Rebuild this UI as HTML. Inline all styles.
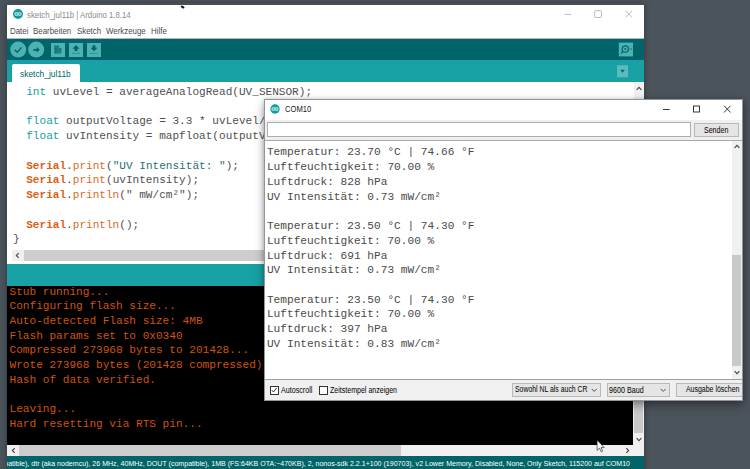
<!DOCTYPE html>
<html lang="de">
<head>
<meta charset="utf-8">
<title>sketch_jul11b | Arduino 1.8.14</title>
<style>
*{box-sizing:border-box;margin:0;padding:0}
html,body{width:750px;height:469px;overflow:hidden}
body{background:#4b535b;font-family:"Liberation Sans",sans-serif;position:relative}
.abs{position:absolute}
#main{position:absolute;left:7px;top:4px;width:637px;height:480px;background:#fff;box-shadow:0 0 6px rgba(0,0,0,.35)}
#main .title{position:absolute;left:19.800px;top:5.800px;font-size:8.700px;transform:scaleX(.897);transform-origin:0 0;color:#8a8a8a;white-space:nowrap;line-height:10px}
#main .menu{position:absolute;left:0;top:19.3px;width:637px;height:14px;font-size:7.9px;color:#4a4a4a;line-height:10px}
#main .menu span{position:absolute;top:2.800px;white-space:nowrap;font-size:8.700px;transform:scaleX(.908);transform-origin:0 0}
.toolbar{position:absolute;left:0;top:35px;width:637px;height:21px;background:#006468}
.tabbar{position:absolute;left:0;top:56px;width:637px;height:22px;background:#17a1a5}
.tab{position:absolute;left:5px;top:4px;width:68px;height:18px;background:#fff;border-radius:2px 2px 0 0;font-size:8.4px;color:#006468;line-height:10px}
.tab span{position:absolute;left:8px;top:5.200px;white-space:nowrap;font-size:9px;transform:scaleX(.933);transform-origin:0 0}
.code{position:absolute;left:5.900px;top:81px;font-family:"Liberation Mono",monospace;font-size:11.09px;line-height:14.74px;white-space:pre;color:#505050}
.code .t{color:#1a9da1}
.code .k{color:#d95f14;font-weight:bold}
.code .f{color:#d96a25}
.code .s{color:#1f7073}
.console{position:absolute;left:0;top:282px;width:626px;height:158.800px;background:#000}
.console pre{position:absolute;left:2.5px;top:-1.5px;font-family:"Liberation Mono",monospace;font-size:11.1px;line-height:14.74px;color:#cf540c;white-space:pre}
.statusbar{position:absolute;left:0;top:452px;width:637px;height:20px;background:#006468;color:#fff;font-size:7.05px;line-height:10px;white-space:nowrap;overflow:hidden}
.statusbar span{position:absolute;right:14px;top:2.800px}
#com{position:absolute;left:264px;top:98.7px;width:478.5px;height:302.700px;overflow:hidden;background:#f0f0f0;border:1px solid #8f969c;box-shadow:0 0 4px rgba(0,0,0,.16),0 4px 9px rgba(0,0,0,.38)}
#com .tb{position:absolute;left:0;top:0;width:100%;height:20.300px;background:#fff}
#com .tb .tt{position:absolute;left:20px;top:4.600px;font-size:8.300px;transform:scaleX(.915);transform-origin:0 0;color:#222;line-height:10px}
#com .out{position:absolute;left:0;top:41.500px;width:467px;height:238px;background:#fff}
#com .out pre{position:absolute;left:1.900px;top:4.200px;font-family:"Liberation Mono",monospace;font-size:11.170px;line-height:14.740px;color:#4a4a4a;white-space:pre}
.sx{display:inline-block;transform:scaleX(.845)}.sx.l{transform-origin:0 50%}.sx.c{transform-origin:50% 50%}
.sm{font-size:7.200px;color:#000;line-height:10px;white-space:nowrap}
</style>
</head>
<body>

<div id="main">
  <svg class="abs" style="left:6px;top:5px" width="10" height="10" viewBox="0 0 10 10"><circle cx="5" cy="5" r="5" fill="#12999d"/><g fill="rgba(255,255,255,.3)" stroke="#c4e6f2" stroke-width=".9"><circle cx="3.400" cy="5" r="1.600"/><circle cx="6.600" cy="5" r="1.600"/></g></svg>
  <div class="abs" style="left:-3px;top:-1px;width:645px;height:1.500px;background:#474f57"></div>
  <svg class="abs" style="left:172px;top:0" width="8" height="6" viewBox="0 0 8 6"><ellipse cx="3.600" cy="3" rx="2.100" ry="1" fill="#14161a" transform="rotate(28 3.600 3)"/></svg>
  <div class="title">sketch_jul11b | Arduino 1.8.14</div>
  <svg class="abs" style="left:550px;top:4px" width="84" height="12" viewBox="0 0 84 12"><g fill="none" stroke="#a8a8a8" stroke-width=".8"><path d="M7.700 6.400h6.400"/><rect x="37.700" y="2.700" width="6.800" height="6.800" rx=".8"/><path d="M68.700 2.800l6.300 6.500M75 2.800l-6.300 6.500"/></g></svg>
  <div class="menu"><span style="left:3px">Datei</span><span style="left:26px">Bearbeiten</span><span style="left:70px">Sketch</span><span style="left:99px">Werkzeuge</span><span style="left:144px">Hilfe</span></div>
  <div class="abs" style="left:0;top:33.600px;width:637px;height:1.300px;background:#b4b4b4"></div>
  <div class="toolbar">
    <svg class="abs" style="left:0;top:0" width="637" height="21" viewBox="0 0 637 21">
      <g fill="#4db2b4">
        <circle cx="11.200" cy="10.600" r="8"/><circle cx="29.200" cy="10.600" r="8"/>
        <rect x="44" y="4" width="14" height="14"/><rect x="62" y="4" width="14" height="14"/><rect x="80" y="4" width="14" height="14"/>
        <rect x="611.800" y="3.600" width="14.200" height="13.800"/>
      </g>
      <g fill="none" stroke="#006468" stroke-width="1.300">
        <path d="M7.600 10.700l2.700 2.600l4.300-4.900"/>
      </g>
      <g fill="#006468">
        <path d="M26.300 9.900h3.400v-1.900l3 2.800l-3 2.800v-1.900h-3.400z"/>
        <path d="M47.400 6.600h4.200l2.700 2.700v5.300h-6.900z" fill="#006468" opacity=".85"/>
        <path d="M51.600 6.600v2.700h2.700z" fill="#4db2b4"/>
        <g fill="#4db2b4" opacity=".75"><rect x="48.600" y="7.600" width="1.200" height="1.200"/><rect x="50.200" y="9.400" width="1.200" height="1.200"/><rect x="48.600" y="11.200" width="1.200" height="1.200"/><rect x="51.800" y="11.200" width="1.200" height="1.200"/><rect x="50.200" y="12.800" width="1.200" height="1.200"/><rect x="52.600" y="12.900" width="1" height="1"/></g>
        <path d="M69 5.900l3.600 3.900h-2.200v2.100h-2.800v-2.100h-2.200z"/><path d="M65.200 14.300h7.800" stroke="#006468" stroke-width=".9" stroke-dasharray="1.200 .6" opacity=".6"/>
        <path d="M87 12.300l3.500-3.500h-2.100v-2.600h-2.800v2.600h-2.100z"/><path d="M83 14.500h8" stroke="#006468" stroke-width=".9" stroke-dasharray="1.200 .6" opacity=".6"/>
      </g>
      <g fill="none" stroke="#006468" stroke-width="1.200"><circle cx="618.300" cy="10" r="3.200"/><path d="M616 12.400l-1.900 2.200"/><path d="M622.600 10h2.400" stroke-dasharray=".9 .6" stroke-width="1"/></g>
      <circle cx="618.300" cy="10" r="1" fill="#006468"/>
    </svg>
  </div>
  <div class="tabbar">
    <div class="tab"><span>sketch_jul11b</span></div>
    <svg class="abs" style="left:610.100px;top:4.600px" width="12" height="13" viewBox="0 0 12 13"><rect x="0" y="0" width="11" height="12.300" fill="#5bbcbe"/><path d="M3.300 4.800h4.600l-2.300 3z" fill="#08696d"/><path d="M1 0.300h9.500" stroke="#17a1a5" stroke-width=".7" stroke-dasharray="1 1.200"/></svg>
  </div>
  <!-- editor -->
  <div class="code">  <span class="t">int</span> uvLevel = averageAnalogRead(UV_SENSOR);

  <span class="t">float</span> outputVoltage = 3.3 * uvLevel/1024;
  <span class="t">float</span> uvIntensity = mapfloat(outputVoltage, 0.99, 2.9, 0.0, 15.0);

  <span class="k">Serial</span>.<span class="f">print</span>(<span class="s">"UV Intensität: "</span>);
  <span class="k">Serial</span>.<span class="f">print</span>(uvIntensity);
  <span class="k">Serial</span>.<span class="f">println</span>(" mW/cm²");

  <span class="k">Serial</span>.<span class="f">println</span>();
}</div>
  <!-- editor v scrollbar -->
  <div class="abs" style="left:626.500px;top:78px;width:10.500px;height:168px;background:#f0f0f0"></div>
  <svg class="abs" style="left:628.600px;top:81.500px" width="6" height="5" viewBox="0 0 6 5"><path d="M.6 3.800l2.400-2.500l2.400 2.500" fill="none" stroke="#454545" stroke-width="1.100"/></svg>
  <!-- editor h scrollbar -->
  <div class="abs" style="left:4.500px;top:246px;width:622px;height:10.500px;background:#f0f0f0"></div>
  <div class="abs" style="left:16.500px;top:246px;width:500px;height:10.500px;background:#cdcdcd"></div>
  <svg class="abs" style="left:8px;top:248px" width="5" height="7" viewBox="0 0 5 7"><path d="M3.700 1.100l-2.400 2.400l2.400 2.400" fill="none" stroke="#454545" stroke-width="1.100"/></svg>
  <!-- status band -->
  <div class="abs" style="left:0;top:260px;width:637px;height:22px;background:#17a1a5"></div>
  <!-- console -->
  <div class="console"><pre>Stub running...
Configuring flash size...
Auto-detected Flash size: 4MB
Flash params set to 0x0340
Compressed 273968 bytes to 201428...
Wrote 273968 bytes (201428 compressed) at 0x00000000 in 17.8 seconds
Hash of data verified.

Leaving...
Hard resetting via RTS pin...</pre></div>
  <div class="abs" style="left:626px;top:282px;width:11px;height:159px;background:#f0f0f0"></div>
  <div class="abs" style="left:627.100px;top:385px;width:9.300px;height:44px;background:#c9c9c9"></div>
  <svg class="abs" style="left:628.600px;top:433px" width="6" height="5" viewBox="0 0 6 5"><path d="M.6 1.200l2.400 2.500l2.400-2.500" fill="none" stroke="#454545" stroke-width="1.100"/></svg>
  <div class="abs" style="left:0;top:441px;width:637px;height:11px;background:#f0f0f0"></div>
  <div class="abs" style="left:12px;top:441px;width:382px;height:11px;background:#cdcdcd"></div>
  <svg class="abs" style="left:4px;top:443px" width="5" height="7" viewBox="0 0 5 7"><path d="M3.700 1.100l-2.400 2.400l2.400 2.400" fill="none" stroke="#454545" stroke-width="1.100"/></svg>
  <svg class="abs" style="left:618px;top:443px" width="5" height="7" viewBox="0 0 5 7"><path d="M1.300 1.100l2.400 2.400l-2.400 2.400" fill="none" stroke="#454545" stroke-width="1.100"/></svg>
  <div class="statusbar"><span>NodeMCU 1.0 (ESP-12E Module), 80 MHz, Flash, Legacy (new can return nullptr), All SSL ciphers (most compatible), dtr (aka nodemcu), 26 MHz, 40MHz, DOUT (compatible), 1MB (FS:64KB OTA:~470KB), 2, nonos-sdk 2.2.1+100 (190703), v2 Lower Memory, Disabled, None, Only Sketch, 115200 auf COM10</span></div>
</div>

<div id="com">
  <div class="tb">
    <svg class="abs" style="left:5.100px;top:4.600px" width="10" height="10" viewBox="0 0 10 10"><circle cx="5" cy="5" r="4.700" fill="#12999d"/><g fill="rgba(255,255,255,.3)" stroke="#c4e6f2" stroke-width=".9"><circle cx="3.400" cy="5" r="1.600"/><circle cx="6.600" cy="5" r="1.600"/></g></svg>
    <div class="tt">COM10</div>
    <svg class="abs" style="left:390px;top:3px" width="84" height="12" viewBox="0 0 84 12"><g fill="none" stroke="#222" stroke-width=".9"><path d="M8 6.500h6.600"/><rect x="38.500" y="3" width="6" height="6"/><path d="M69 2.700l6.600 6.800M75.600 2.700l-6.600 6.800"/></g></svg>
  </div>
  <div class="abs" style="left:2px;top:22.800px;width:423.500px;height:14.500px;background:#fff;border:1px solid #adadad"></div>
  <div class="abs sm" style="left:429px;top:23px;width:45.300px;height:14px;background:#e5e5e5;border:1px solid #b8b8b8;text-align:center;line-height:12.300px;font-size:8.39px;text-indent:-.3px"><span class="sx c">Senden</span></div>
  <div class="abs" style="left:0;top:40.700px;width:478px;height:1px;background:#a8a8a8"></div>
  <div class="out"><pre>Temperatur: 23.70 °C | 74.66 °F
Luftfeuchtigkeit: 70.00 %
Luftdruck: 828 hPa
UV Intensität: 0.73 mW/cm²

Temperatur: 23.50 °C | 74.30 °F
Luftfeuchtigkeit: 70.00 %
Luftdruck: 691 hPa
UV Intensität: 0.73 mW/cm²

Temperatur: 23.50 °C | 74.30 °F
Luftfeuchtigkeit: 70.00 %
Luftdruck: 397 hPa
UV Intensität: 0.83 mW/cm²</pre></div>
  <!-- com scrollbar -->
  <div class="abs" style="left:466.500px;top:41.500px;width:11px;height:238px;background:#f0f0f0"></div>
  <div class="abs" style="left:466.800px;top:155.300px;width:9.700px;height:111.500px;background:#c9c9c9"></div>
  <svg class="abs" style="left:468.700px;top:44.800px" width="6" height="5" viewBox="0 0 6 5"><path d="M.6 3.800l2.400-2.500l2.400 2.500" fill="none" stroke="#454545" stroke-width="1.100"/></svg>
  <svg class="abs" style="left:468.700px;top:270px" width="6" height="5" viewBox="0 0 6 5"><path d="M.6 1.200l2.400 2.500l2.400-2.500" fill="none" stroke="#454545" stroke-width="1.100"/></svg>
  <div class="abs" style="left:0;top:279.300px;width:478px;height:1px;background:#a0a0a0"></div>
  <!-- bottom row -->
  <div class="abs" style="left:5px;top:286.300px;width:8.800px;height:8.800px;background:#fff;border:1px solid #333"></div>
  <svg class="abs" style="left:6.300px;top:287.600px" width="6.400" height="6.400" viewBox="0 0 6 6"><path d="M.8 3l1.500 1.700l3-3.800" fill="none" stroke="#222" stroke-width=".85"/></svg>
  <div class="abs sm" style="left:16.300px;top:285.600px;font-size:8.46px"><span class="sx l">Autoscroll</span></div>
  <div class="abs" style="left:54.300px;top:286.300px;width:8.800px;height:8.800px;background:#fff;border:1px solid #333"></div>
  <div class="abs sm" style="left:65px;top:285.600px;font-size:8.35px"><span class="sx l">Zeitstempel anzeigen</span></div>
  <div class="abs sm" style="left:247.300px;top:283.500px;width:88.600px;height:13.800px;background:#e5e5e5;border:1px solid #b8b8b8;line-height:12.400px;padding-left:1.800px;font-size:8.16px"><span class="sx l">Sowohl NL als auch CR</span></div>
  <svg class="abs" style="left:326.400px;top:288.800px" width="6.400" height="4.500" viewBox="0 0 7 5"><path d="M.7 1l2.800 2.800l2.800-2.800" fill="none" stroke="#404040" stroke-width="1"/></svg>
  <div class="abs sm" style="left:342.300px;top:283.500px;width:62.600px;height:13.800px;background:#e5e5e5;border:1px solid #b8b8b8;line-height:12.400px;padding-left:1px;font-size:8.49px"><span class="sx l">9600 Baud</span></div>
  <svg class="abs" style="left:394.800px;top:288.800px" width="6.400" height="4.500" viewBox="0 0 7 5"><path d="M.7 1l2.800 2.800l2.800-2.800" fill="none" stroke="#404040" stroke-width="1"/></svg>
  <div class="abs sm" style="left:411px;top:283.500px;width:73px;height:13.800px;background:#e5e5e5;border:1px solid #b8b8b8;text-align:center;line-height:12.400px;font-size:8.28px"><span class="sx c">Ausgabe löschen</span></div>
</div>

<svg class="abs" style="left:596px;top:439px" width="11" height="14" viewBox="0 0 11 14"><path d="M1.100 1.100v10.300l2.400-2.300l1.700 3.700l1.400-.6l-1.600-3.600h3.200z" fill="#fff" stroke="#111" stroke-width=".6" stroke-linejoin="round"/></svg>
</body>
</html>
